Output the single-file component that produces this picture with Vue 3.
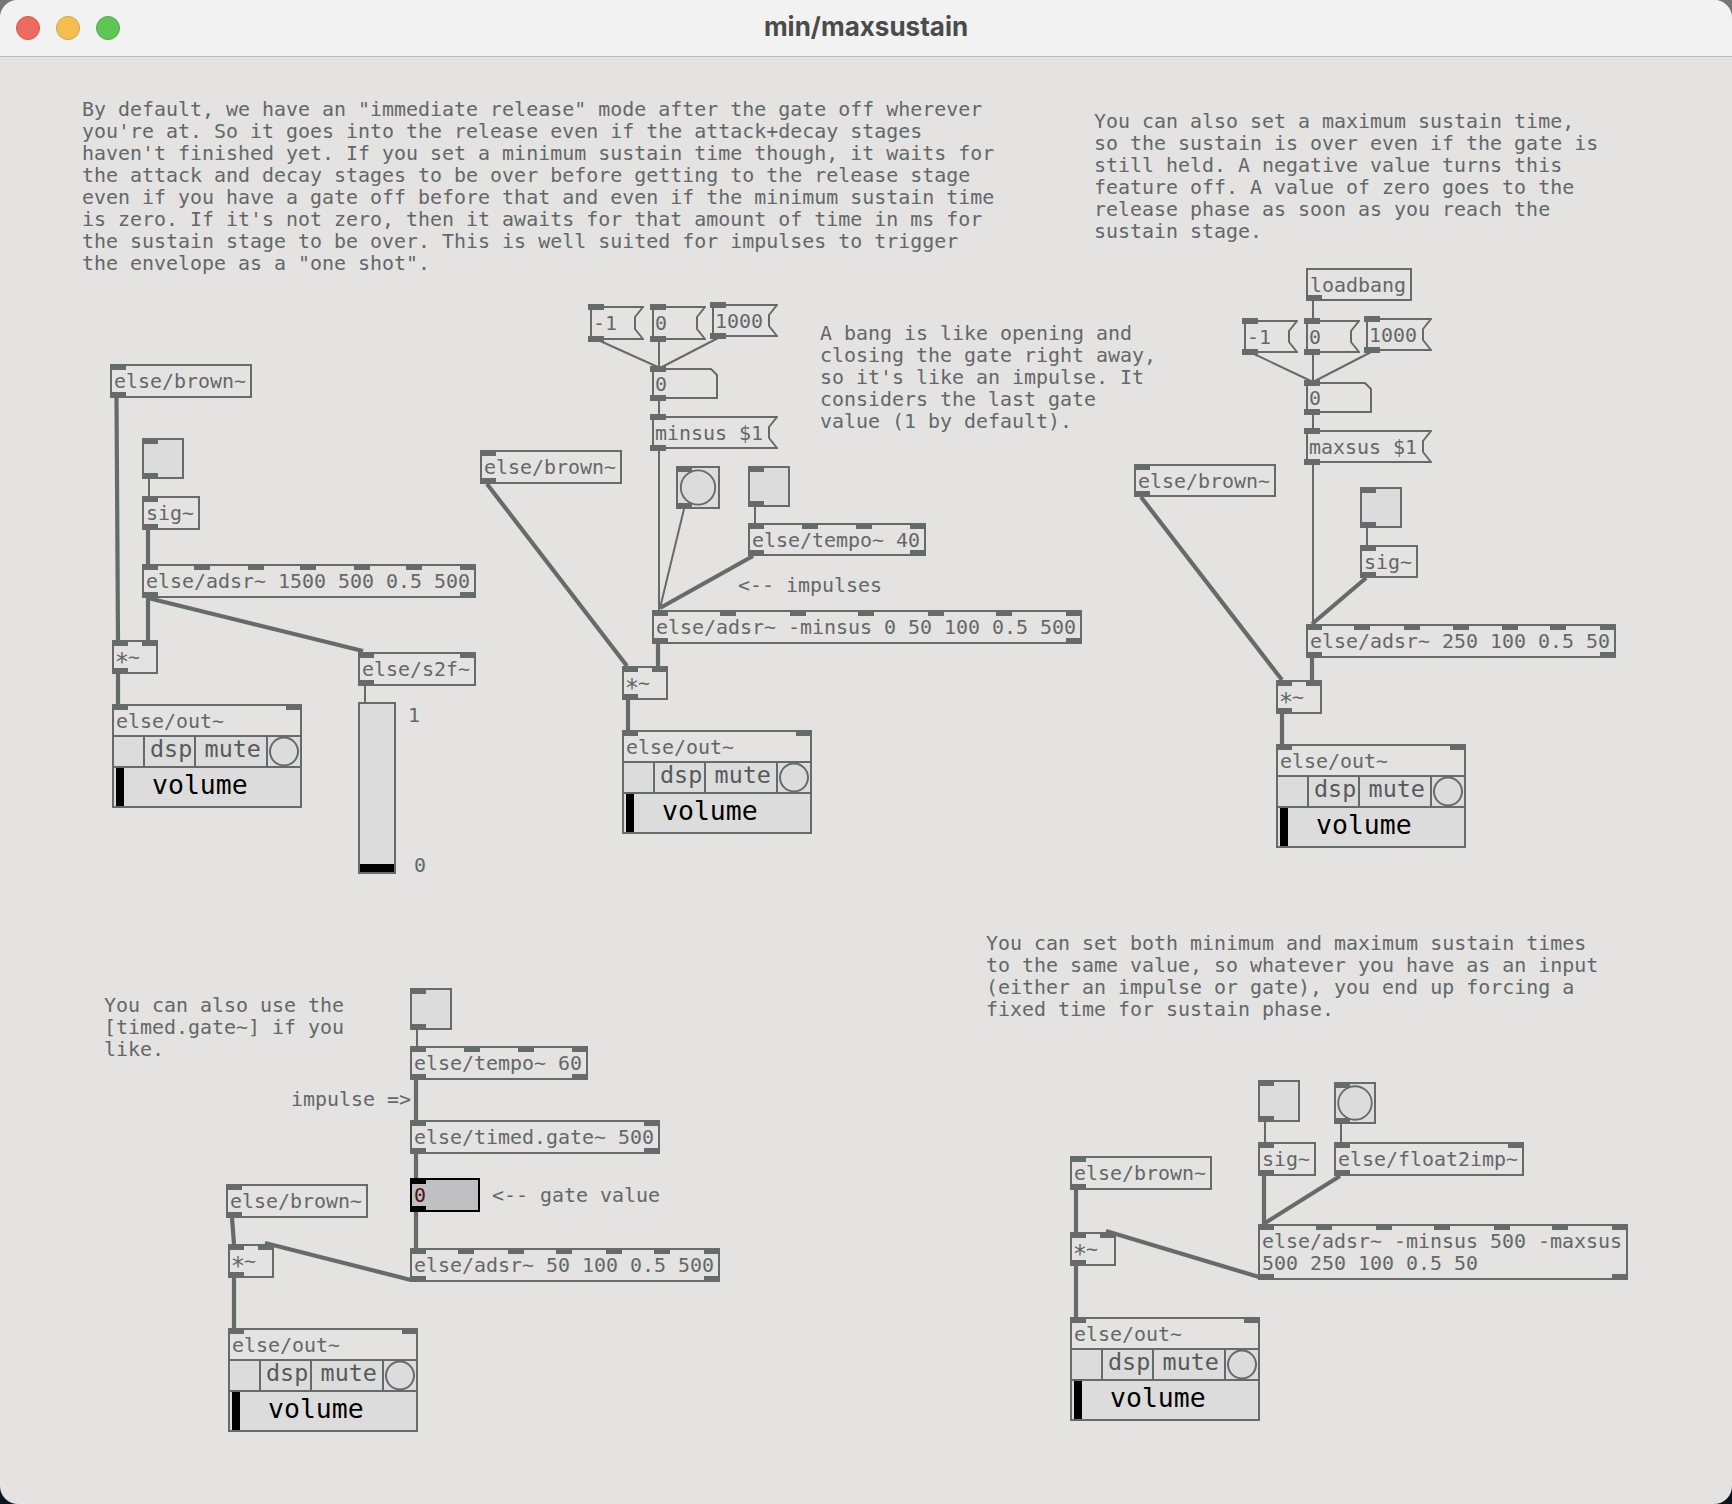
<script setup>
const TOP = 57

const paragraphs = [
  { x: 82, y: 109, lines: [
    'By default, we have an "immediate release" mode after the gate off wherever',
    "you're at. So it goes into the release even if the attack+decay stages",
    "haven't finished yet. If you set a minimum sustain time though, it waits for",
    'the attack and decay stages to be over before getting to the release stage',
    'even if you have a gate off before that and even if the minimum sustain time',
    "is zero. If it's not zero, then it awaits for that amount of time in ms for",
    'the sustain stage to be over. This is well suited for impulses to trigger',
    'the envelope as a "one shot".'] },
  { x: 1094, y: 121, lines: [
    'You can also set a maximum sustain time,',
    'so the sustain is over even if the gate is',
    'still held. A negative value turns this',
    'feature off. A value of zero goes to the',
    'release phase as soon as you reach the',
    'sustain stage.'] },
  { x: 820, y: 333, lines: [
    'A bang is like opening and',
    'closing the gate right away,',
    "so it's like an impulse. It",
    'considers the last gate',
    'value (1 by default).'] },
  { x: 738, y: 585, lines: ['<-- impulses'] },
  { x: 104, y: 1005, lines: ['You can also use the', '[timed.gate~] if you', 'like.'] },
  { x: 291, y: 1099, lines: ['impulse =>'] },
  { x: 492, y: 1195, lines: ['<-- gate value'] },
  { x: 986, y: 943, lines: [
    'You can set both minimum and maximum sustain times',
    'to the same value, so whatever you have as an input',
    '(either an impulse or gate), you end up forcing a',
    'fixed time for sustain phase.'] },
  { x: 408, y: 715, lines: ['1'] },
  { x: 414, y: 865, lines: ['0'] },
]

const nodes = [
  // left patch
  { t: 'obj', x: 110, y: 364, w: 142, h: 34, text: 'else/brown~' },
  { t: 'toggle', x: 142, y: 438, w: 42, h: 41 },
  { t: 'obj', x: 142, y: 496, w: 58, h: 34, text: 'sig~' },
  { t: 'obj', x: 142, y: 564, w: 334, h: 34, text: 'else/adsr~ 1500 500 0.5 500', ins: [142, 194, 248, 300, 354, 406, 460], outs: [142, 460] },
  { t: 'obj', x: 112, y: 640, w: 46, h: 34, star: true, ins: [112, 142] },
  { t: 'obj', x: 358, y: 652, w: 118, h: 34, text: 'else/s2f~', ins: [358, 460] },
  { t: 'slider', x: 358, y: 702, w: 38, h: 172 },
  { t: 'out', x: 112, y: 704, w: 190, h: 104 },
  // middle patch
  { t: 'msg', x: 590, y: 306, w: 54, h: 34, text: '-1' },
  { t: 'msg', x: 652, y: 306, w: 54, h: 34, text: '0' },
  { t: 'msg', x: 712, y: 304, w: 66, h: 33, text: '1000' },
  { t: 'num', x: 652, y: 368, w: 66, h: 31, text: '0' },
  { t: 'msg', x: 652, y: 416, w: 126, h: 33, text: 'minsus $1' },
  { t: 'obj', x: 480, y: 450, w: 142, h: 34, text: 'else/brown~' },
  { t: 'bang', x: 676, y: 466, w: 44, h: 43 },
  { t: 'toggle', x: 748, y: 466, w: 42, h: 41 },
  { t: 'obj', x: 748, y: 523, w: 178, h: 33, text: 'else/tempo~ 40', ins: [748, 802, 856, 910], outs: [748, 910] },
  { t: 'obj', x: 652, y: 610, w: 430, h: 34, text: 'else/adsr~ -minsus 0 50 100 0.5 500', ins: [652, 720, 790, 858, 928, 996, 1066], outs: [652, 1066] },
  { t: 'obj', x: 622, y: 666, w: 46, h: 34, star: true, ins: [622, 652] },
  { t: 'out', x: 622, y: 730, w: 190, h: 104 },
  // right patch
  { t: 'obj', x: 1306, y: 268, w: 106, h: 33, text: 'loadbang', ins: [] },
  { t: 'msg', x: 1244, y: 320, w: 54, h: 33, text: '-1' },
  { t: 'msg', x: 1306, y: 320, w: 54, h: 33, text: '0' },
  { t: 'msg', x: 1366, y: 318, w: 66, h: 33, text: '1000' },
  { t: 'num', x: 1306, y: 382, w: 66, h: 31, text: '0' },
  { t: 'msg', x: 1306, y: 430, w: 126, h: 33, text: 'maxsus $1' },
  { t: 'obj', x: 1134, y: 464, w: 142, h: 33, text: 'else/brown~' },
  { t: 'toggle', x: 1360, y: 487, w: 42, h: 41 },
  { t: 'obj', x: 1360, y: 545, w: 58, h: 33, text: 'sig~' },
  { t: 'obj', x: 1306, y: 624, w: 310, h: 34, text: 'else/adsr~ 250 100 0.5 50', ins: [1306, 1354, 1404, 1453, 1502, 1550, 1600], outs: [1306, 1600] },
  { t: 'obj', x: 1276, y: 680, w: 46, h: 34, star: true, ins: [1276, 1306] },
  { t: 'out', x: 1276, y: 744, w: 190, h: 104 },
  // bottom left patch
  { t: 'toggle', x: 410, y: 988, w: 42, h: 42 },
  { t: 'obj', x: 410, y: 1046, w: 178, h: 34, text: 'else/tempo~ 60', ins: [410, 464, 518, 572], outs: [410, 572] },
  { t: 'obj', x: 410, y: 1120, w: 250, h: 34, text: 'else/timed.gate~ 500', ins: [410, 644], outs: [410, 644] },
  { t: 'active', x: 410, y: 1178, w: 70, h: 34, text: '0' },
  { t: 'obj', x: 410, y: 1248, w: 310, h: 34, text: 'else/adsr~ 50 100 0.5 500', ins: [410, 458, 508, 556, 606, 654, 704], outs: [410, 704] },
  { t: 'obj', x: 226, y: 1184, w: 142, h: 34, text: 'else/brown~' },
  { t: 'obj', x: 228, y: 1244, w: 46, h: 34, star: true, ins: [228, 258] },
  { t: 'out', x: 228, y: 1328, w: 190, h: 104 },
  // bottom right patch
  { t: 'toggle', x: 1258, y: 1080, w: 42, h: 42 },
  { t: 'bang', x: 1334, y: 1082, w: 42, h: 42 },
  { t: 'obj', x: 1258, y: 1142, w: 58, h: 34, text: 'sig~' },
  { t: 'obj', x: 1334, y: 1142, w: 190, h: 34, text: 'else/float2imp~', ins: [1334, 1508] },
  { t: 'obj', x: 1070, y: 1156, w: 142, h: 34, text: 'else/brown~' },
  { t: 'obj', x: 1070, y: 1232, w: 46, h: 34, star: true, ins: [1070, 1100] },
  { t: 'obj', x: 1258, y: 1224, w: 370, h: 56, text: 'else/adsr~ -minsus 500 -maxsus\n500 250 100 0.5 50', ins: [1258, 1316, 1376, 1434, 1494, 1552, 1612], outs: [1258, 1612] },
  { t: 'out', x: 1070, y: 1317, w: 190, h: 104 },
]

// [x1, y1, x2, y2] pairs
const thin = [
  [149, 479, 149, 496],
  [365, 686, 365, 702],
  [598, 340, 660, 368], [659, 340, 659, 368], [720, 337, 660, 368],
  [659, 399, 659, 416], [659, 449, 659, 610],
  [684, 509, 660, 608], [755, 507, 755, 523],
  [1313, 301, 1313, 320],
  [1252, 353, 1313, 382], [1313, 353, 1313, 382], [1373, 351, 1313, 382],
  [1313, 413, 1313, 430], [1313, 463, 1313, 624],
  [1367, 528, 1367, 545],
  [417, 1030, 417, 1046],
  [1265, 1122, 1265, 1142], [1341, 1124, 1341, 1142],
]
const thick = [
  [116.5, 398, 118, 640], [148, 530, 148, 564], [148, 598, 148, 640],
  [148, 598, 363, 651], [118, 674, 118, 704],
  [753, 556, 660, 608], [658, 644, 658, 666], [487, 484, 627, 666], [628, 700, 628, 730],
  [1366, 578, 1312, 624], [1312, 658, 1312, 680], [1141, 497, 1282, 680], [1282, 714, 1282, 744],
  [416, 1080, 416, 1120], [416, 1154, 416, 1178], [416, 1212, 416, 1248],
  [411, 1280, 265, 1243], [232, 1218, 234, 1244], [234, 1278, 234, 1328],
  [1076, 1190, 1076, 1232], [1076, 1266, 1076, 1317], [1264, 1176, 1264, 1224],
  [1340, 1176, 1265, 1223], [1259, 1277, 1106, 1231],
]

const place = (n) => ({ left: `${n.x}px`, top: `${n.y - TOP}px`, width: `${n.w}px`, height: `${n.h}px` })
const textPlace = (p) => ({ left: `${p.x}px`, top: `${p.y - 11 - TOP}px` })

const hasPorts = (n) => n.t !== 'slider'
const inlets = (n) => (n.ins || [n.x]).map((x) => x - n.x)
const outlets = (n) => {
  if (n.t === 'out' || n.t === 'slider') return []
  return (n.outs || [n.x]).map((x) => x - n.x)
}
const outInlets = (n) => [0, n.w - 16]

const flag = (n) => {
  const w = n.w, h = n.h
  return `M1 1H${w - 1}L${w - 9} 11V${h - 11}L${w - 1} ${h - 1}H1Z`
}
const cut = (n) => {
  const w = n.w, h = n.h
  return `M1 1H${w - 7}L${w - 1} 7V${h - 1}H1Z`
}
</script>

<template>
  <div class="window">
    <header class="titlebar">
      <div class="lights">
        <span class="light red"></span>
        <span class="light yellow"></span>
        <span class="light green"></span>
      </div>
      <div class="title">min/maxsustain</div>
      <div></div>
    </header>

    <main class="canvas">
      <svg class="wires" viewBox="0 57 1732 1447" width="1732" height="1447">
        <line v-for="(l, i) in thin" :key="'a' + i" class="thin" :x1="l[0]" :y1="l[1]" :x2="l[2]" :y2="l[3]" />
        <line v-for="(l, i) in thick" :key="'b' + i" class="thick" :x1="l[0]" :y1="l[1]" :x2="l[2]" :y2="l[3]" />
      </svg>

      <pre v-for="(p, i) in paragraphs" :key="'p' + i" class="comment" :style="textPlace(p)">{{ p.lines.join('\n') }}</pre>

      <div v-for="(n, i) in nodes" :key="'n' + i" class="node" :class="n.t" :style="place(n)">
        <svg v-if="n.t === 'msg'" class="shape" :width="n.w" :height="n.h"><path :d="flag(n)" /></svg>
        <svg v-if="n.t === 'num'" class="shape" :width="n.w" :height="n.h"><path :d="cut(n)" /></svg>

        <pre v-if="n.text" class="label">{{ n.text }}</pre>
        <pre v-if="n.star" class="label"><span class="star">*</span>~</pre>

        <svg v-if="n.t === 'bang'" class="disc" viewBox="0 0 42 42"><circle cx="21" cy="21" r="18.5" /></svg>
        <div v-if="n.t === 'slider'" class="slider-bar"></div>

        <template v-if="n.t === 'out'">
          <div class="out-title">else/out~</div>
          <div class="out-row">
            <div class="cell cell-a"></div>
            <div class="cell cell-dsp">dsp</div>
            <div class="cell cell-mute">mute</div>
            <div class="cell cell-dot"><svg viewBox="0 0 32 30" width="32" height="30"><circle cx="16" cy="14.5" r="14" /></svg></div>
          </div>
          <div class="out-vol"><span class="vol-bar"></span><span class="vol-text">volume</span></div>
        </template>

        <template v-if="n.t === 'out'">
          <span v-for="(px, k) in outInlets(n)" :key="'o' + k" class="port in" :style="{ left: `${px}px` }"></span>
        </template>
        <template v-else-if="hasPorts(n)">
          <span v-for="(px, k) in inlets(n)" :key="'i' + k" class="port in" :style="{ left: `${px}px` }"></span>
          <span v-for="(px, k) in outlets(n)" :key="'u' + k" class="port out-port" :style="{ left: `${px}px` }"></span>
        </template>
      </div>
    </main>
  </div>
</template>

<style>
html, body {
  margin: 0;
  background: linear-gradient(#777 0, #555 8%, #0c1420 100%);
}
</style>

<style scoped>
.window {
  width: 1732px;
  height: 1504px;
  border-radius: 18px;
  overflow: hidden;
  display: flex;
  flex-direction: column;
  background: #e4e3e1;
}
.titlebar {
  flex: none;
  height: 56px;
  border-bottom: 1px solid #bcbcbc;
  background: #f2f2f2;
  display: grid;
  grid-template-columns: 1fr auto 1fr;
  align-items: center;
}
.lights {
  display: flex;
  gap: 16px;
  padding-left: 16px;
}
.light {
  width: 22px;
  height: 22px;
  border-radius: 50%;
  border: 1px solid;
}
.red { background: #ec6a5e; border-color: #d3574c; }
.yellow { background: #f5bf4f; border-color: #d9a23e; }
.green { background: #61c554; border-color: #52a846; }
.title {
  font-family: Inter, "Liberation Sans", sans-serif;
  font-weight: 700;
  font-size: 26px;
  line-height: 28px;
  color: #4b4b4b;
  margin-top: -2px;
}
.canvas {
  flex: 1;
  position: relative;
}
.wires {
  position: absolute;
  left: 0;
  top: 0;
}
.thin, .thick {
  stroke: #656b6b;
}
.thin { stroke-width: 2; }
.thick { stroke-width: 4.2; }

.comment, .label {
  margin: 0;
  font-family: "DejaVu Sans Mono", monospace;
  font-size: 19.95px;
  line-height: 22px;
  color: #62686a;
  white-space: pre;
}
.comment {
  position: absolute;
}
.star {
  display: inline-block;
  transform: translateY(5px) scale(1.2);
}

.node {
  position: absolute;
  box-sizing: border-box;
}
.obj, .toggle, .slider, .out, .bang, .active {
  border: 2px solid #656b6b;
}
.obj, .out, .active {
  background: #e4e3e1;
}
.obj .label, .msg .label, .num .label, .active .label {
  position: absolute;
  left: 2px;
  top: 50%;
  transform: translateY(-50%);
}
.msg .label, .num .label {
  left: 3px;
}
.shape {
  position: absolute;
  left: 0;
  top: 0;
}
.shape path {
  fill: #e4e3e1;
  stroke: #656b6b;
  stroke-width: 2;
}
.toggle, .bang, .slider {
  background: #dcdcdc;
}
.disc {
  display: block;
  width: 100%;
  height: 100%;
  overflow: visible;
}
.disc circle, .cell-dot circle {
  fill: none;
  stroke: #656b6b;
  stroke-width: 2;
}
.cell-dot svg {
  display: block;
  overflow: visible;
}

.active {
  border-color: #000;
  background: #c0bfc2;
}
.active .label {
  color: #4e0f12;
}
.active .port {
  background: #000;
}

.slider {
  display: flex;
  align-items: flex-end;
}
.slider-bar {
  flex: 1;
  height: 8px;
  background: #000;
}

.port {
  position: absolute;
  width: 16px;
  height: 6px;
  margin-left: -2px;
  background: #656b6b;
}
.port.in { top: -2px; }
.port.out-port { bottom: -2px; }

.out {
  display: flex;
  flex-direction: column;
}
.out-title {
  flex: none;
  height: 29px;
  padding-left: 2px;
  font-family: "DejaVu Sans Mono", monospace;
  font-size: 19.95px;
  line-height: 31px;
  color: #62686a;
}
.out-row {
  flex: none;
  height: 33px;
  box-sizing: border-box;
  border-top: 2px solid #656b6b;
  border-bottom: 2px solid #656b6b;
  display: flex;
  background: #dcdcdc;
}
.cell {
  box-sizing: border-box;
  font-family: "DejaVu Sans Mono", monospace;
  font-size: 23.4px;
  line-height: 25px;
  color: #565a5b;
  text-align: center;
}
.cell-a { width: 31px; border-right: 2px solid #656b6b; }
.cell-dsp { width: 52px; padding-left: 3px; border-right: 2px solid #656b6b; }
.cell-mute { width: 72px; padding-left: 3px; border-right: 2px solid #656b6b; }
.cell-dot { flex: 1; }
.out-vol {
  flex: 1;
  background: #dcdcdc;
  display: flex;
  padding-left: 2px;
}
.vol-bar {
  width: 8px;
  background: #000;
}
.vol-text {
  margin-left: 28px;
  font-family: "DejaVu Sans Mono", monospace;
  font-size: 26.5px;
  line-height: 34px;
  color: #000;
}
</style>
